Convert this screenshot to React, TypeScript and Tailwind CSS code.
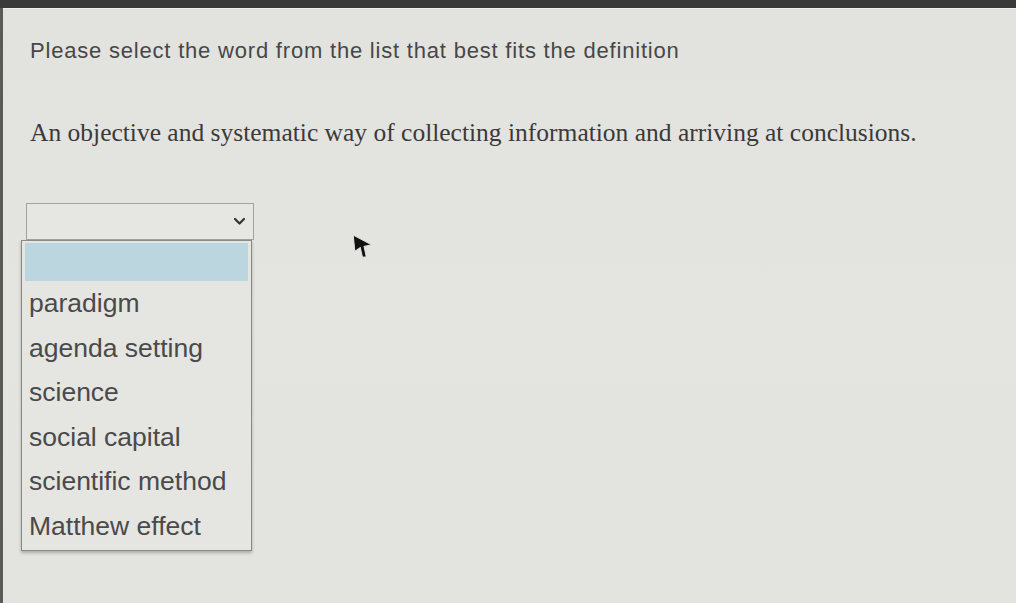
const options = ['paradigm', 'agenda setting', 'science', 'social capital', 'scientific method', 'Matthew effect'];

export default function App() {
  return (
    <div className="w-[1016px] h-[603px] overflow-hidden bg-[#3b3b3b] flex flex-col">
      <div className="h-[8px] bg-[#3a3a3a]" />
      <div className="flex-1 flex">
        <div className="w-[3px] bg-[#5a5a58]" />
        <div className="relative flex-1 bg-gradient-to-b from-[#e2e2df] via-[#e4e4e1] to-[#e3e3e0] border-t border-[#f0f0ee] pl-[27px]">
          <p className="mt-[27px] text-[22px] leading-[30px] tracking-[0.8px] text-[#474747] [font-family:'Liberation_Sans',Arial,sans-serif]">
            Please select the word from the list that best fits the definition
          </p>
          <p className="mt-[51px] text-[25.5px] leading-[32px] text-[#3a3a3a] [font-family:'Liberation_Serif','Times_New_Roman',serif]">
            An objective and systematic way of collecting information and arriving at conclusions.
          </p>

          <div className="mt-[54px] ml-[-4px] w-[228px]">
            {/* select box */}
            <div className="h-[37px] border border-[#a2a2a0] bg-[#e6e6e3] flex items-center justify-end pr-[7px]">
              <svg width="13" height="9" viewBox="0 0 13 9">
                <path d="M2 2 L6.5 6.5 L11 2" fill="none" stroke="#333" strokeWidth="2.2" strokeLinecap="round" strokeLinejoin="round" />
              </svg>
            </div>
            {/* dropdown */}
            <div className="ml-[-5px] mr-[2px] border border-[#8a8a88] bg-[#e5e5e2] shadow-[0_2px_3px_rgba(0,0,0,0.25)] [font-family:'Liberation_Sans',Arial,sans-serif]">
              <div className="h-[38px] mx-[3px] mt-[2px] bg-[#bcd6df]" />
              <ul className="pb-[2px]">
                {options.map((o) => (
                  <li key={o} className="h-[44.5px] flex items-center px-[7px] text-[26.5px] text-[#4a4a4a] leading-none">
                    {o}
                  </li>
                ))}
              </ul>
            </div>
          </div>

          {/* mouse pointer */}
          <svg className="absolute left-[348px] top-[223px]" width="24" height="30" viewBox="0 0 22 26">
            <path d="M2 2 L19 11 L12 12.5 L14 22 L10.5 22.5 L8.5 13.5 L3.5 17 Z" fill="#111" stroke="#ddd" strokeWidth="1" />
          </svg>
        </div>
      </div>
    </div>
  );
}
